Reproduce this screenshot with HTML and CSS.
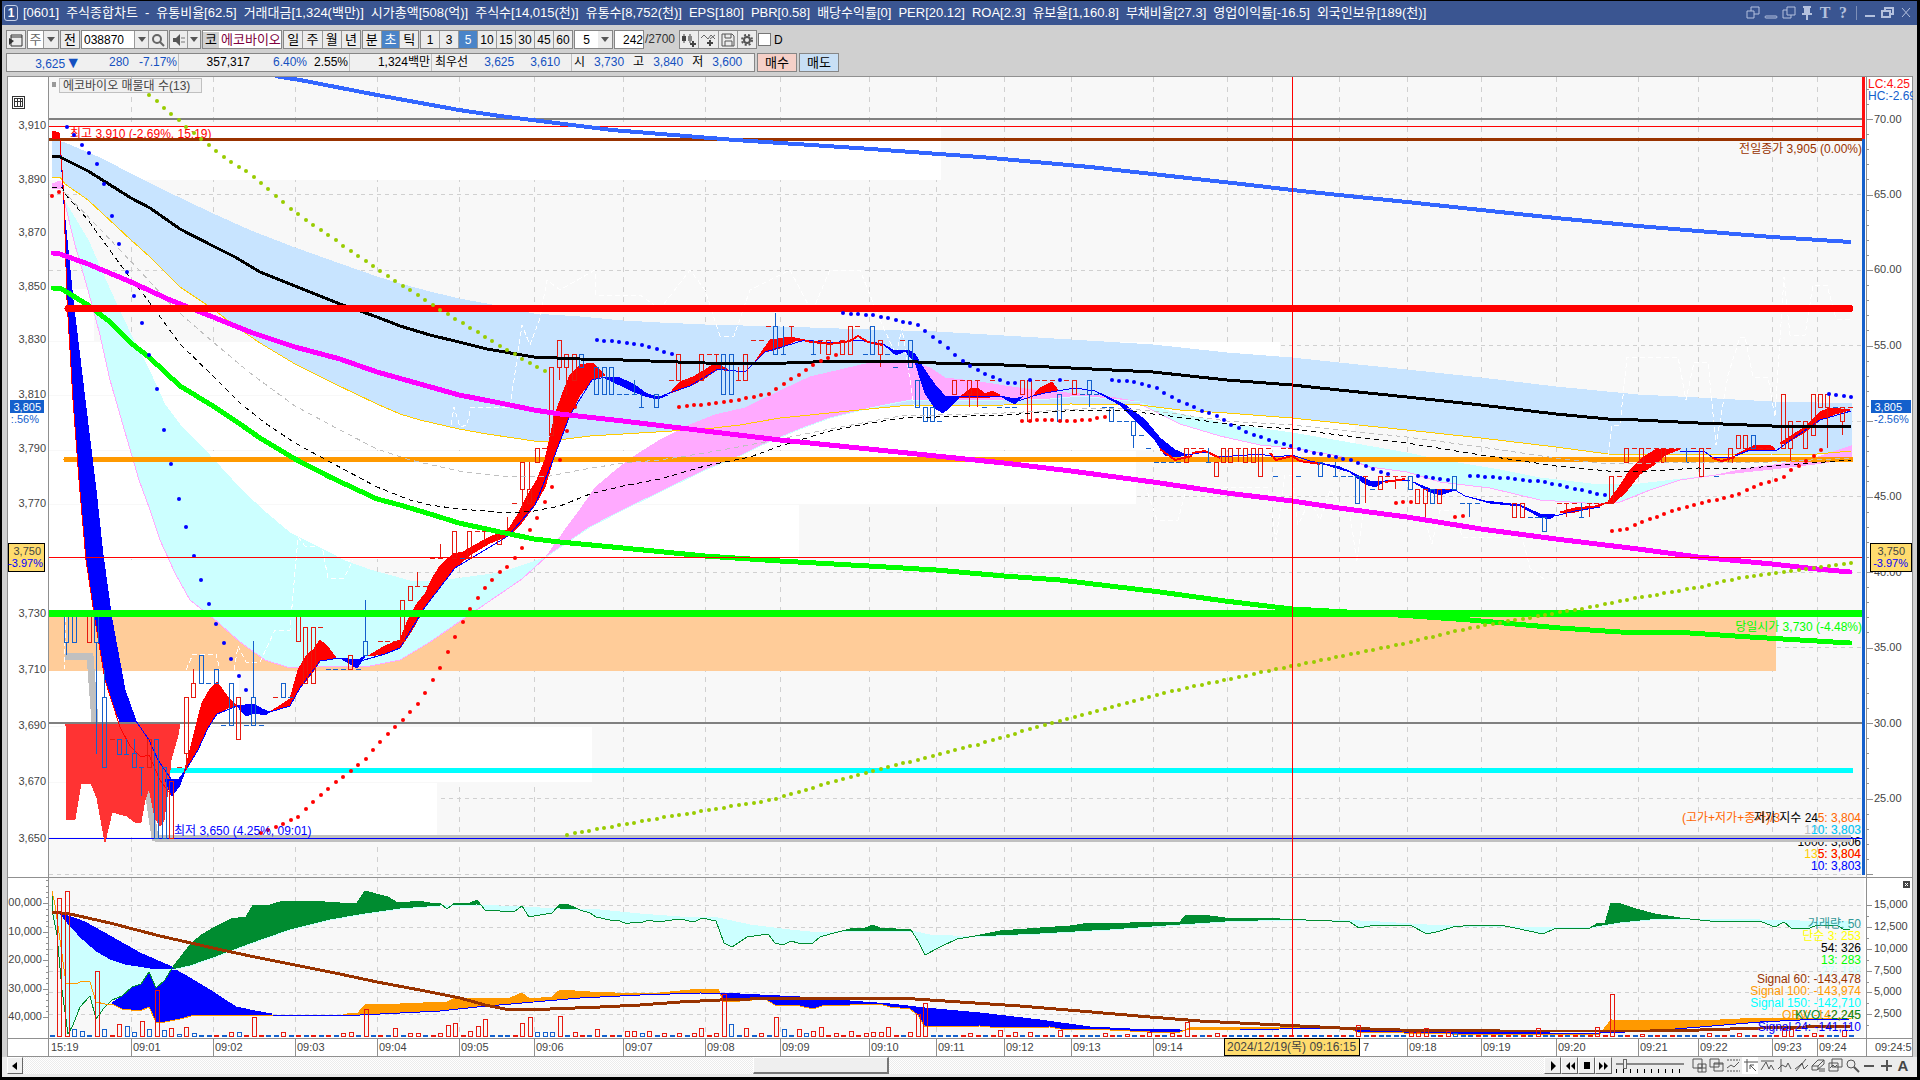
FILE: index.html
```html
<!DOCTYPE html>
<html lang="ko">
<head>
<meta charset="utf-8">
<title>[0601] 주식종합차트</title>
<link rel="stylesheet" href="styles.css">
</head>
<body>
<div class="window">
  <header class="titlebar">
    <span class="badge">1</span>
    <h1 class="title"><span>[0601]</span><span>주식종합차트</span><span>-</span><span>유통비율[62.5]</span><span>거래대금[1,324(백만)]</span><span>시가총액[508(억)]</span><span>주식수[14,015(천)]</span><span>유통수[8,752(천)]</span><span>EPS[180]</span><span>PBR[0.58]</span><span>배당수익률[0]</span><span>PER[20.12]</span><span>ROA[2.3]</span><span>유보율[1,160.8]</span><span>부채비율[27.3]</span><span>영업이익률[-16.5]</span><span>외국인보유[189(천)]</span></h1>
    <div class="winbtns">
      <button aria-label="분리"><svg width="14" height="14"><path d="M5 1h8v7h-5M1 5h7v7h-7zM5 5v-4" /></svg></button>
      <button aria-label="접기"><svg width="14" height="14"><rect x="1" y="10" width="12" height="2" rx="1"/></svg></button>
      <button aria-label="복제"><svg width="14" height="14"><path d="M5 1h8v8h-8zM5 4h-4v8h8v-3"/></svg></button>
      <button aria-label="고정"><svg width="14" height="14"><path class="solid" d="M3 0h8v2h-1v5h2v2h-4v5h-2v-5h-4v-2h2v-5h-1z"/></svg></button>
      <button class="glyph" aria-label="글꼴">T</button>
      <button class="glyph" aria-label="도움말">?</button>
      <span class="sep"></span>
      <button aria-label="최소화"><svg width="14" height="14"><path class="solid" d="M2 9h10v2h-10z"/></svg></button>
      <button aria-label="복원"><svg width="14" height="14"><path d="M4 5v-3h8v6h-3M1 5h8v6h-8z" stroke-width="2"/></svg></button>
      <button aria-label="닫기"><svg width="14" height="14"><path d="M3 2l8 9M11 2l-8 9"/></svg></button>
    </div>
  </header>

  <section class="tools">
    <div class="row">
      <button class="btn w20" aria-label="목록"><svg width="16" height="14"><path d="M3 2h11v11h-11zM3 4h11" stroke="#333" fill="none"/><path d="M1 5v7l5-4z" fill="#333"/></svg></button>
      <div class="group g32"><button class="cell white dim">주</button><button class="cell w14 arrow" aria-label="펼치기"></button></div>
      <button class="btn w20">전</button>
      <div class="group g87"><input class="code" value="038870" aria-label="종목코드"><button class="cell w14 arrow" aria-label="종목 펼치기"></button><button class="cell w18" aria-label="검색"><svg width="14" height="14"><circle cx="6" cy="6" r="4" stroke="#666" fill="none" stroke-width="2"/><path d="M9 9l4 4" stroke="#666" stroke-width="2"/></svg></button></div>
      <div class="group g32"><button class="cell" aria-label="소리"><svg width="14" height="14"><path d="M1 5h3l4-4v12l-4-4h-3z" fill="#555"/><path d="M10 4v2M10 8v2M12 4v2M12 8v2" stroke="#777"/></svg></button><button class="cell w12 arrow" aria-label="소리 펼치기"></button></div>
      <div class="group name"><span class="mkt">코</span><span class="stock">에코바이오</span></div>
      <div class="group g78"><button class="cell">일</button><button class="cell">주</button><button class="cell">월</button><button class="cell">년</button></div>
      <div class="group g57"><button class="cell">분</button><button class="cell on">초</button><button class="cell">틱</button></div>
      <div class="group g153 digits"><button class="cell">1</button><button class="cell">3</button><button class="cell on">5</button><button class="cell">10</button><button class="cell">15</button><button class="cell">30</button><button class="cell">45</button><button class="cell">60</button></div>
      <div class="group g39 digits"><input class="num5" value="5" aria-label="주기"><button class="cell w14 arrow" aria-label="주기 펼치기"></button></div>
      <div class="group digits"><input class="num242" value="242" aria-label="표시 봉 수"></div>
      <span class="total">/2700</span>
      <div class="group g78">
        <button class="cell" aria-label="봉 추가"><svg width="16" height="14"><path d="M3 1v9M9 1v9" stroke="#444"/><path d="M1 3h4v5h-4z" fill="#444"/><path d="M7 3h4v5h-4z" fill="#888"/><path d="M12 8v6M9 11h6" stroke="#444" stroke-width="2"/></svg></button>
        <button class="cell" aria-label="지표 추가"><svg width="16" height="14"><path d="M1 5l3-3 4 4 3-4 4 4M10 6l5-4" stroke="#666" fill="none"/><path d="M10 7v6M7 10h6" stroke="#444" stroke-width="2"/></svg></button>
        <button class="cell" aria-label="저장"><svg width="14" height="14"><path d="M1 1h10l2 2v10h-12zM4 1v4h6v-4M4 13v-5h7v5" stroke="#555" fill="none"/></svg></button>
        <button class="cell" aria-label="설정"><svg width="14" height="14"><circle cx="7" cy="7" r="3" stroke="#555" fill="none" stroke-width="2"/><circle cx="7" cy="7" r="5" stroke="#555" fill="none" stroke-width="2" stroke-dasharray="2 2"/></svg></button>
      </div>
      <label class="check"><input type="checkbox">D</label>
    </div>
    <div class="row">
      <div class="quote">
        <div class="q q1"><span class="b">3,625<i>▼</i></span><span class="b c48">280</span><span class="b c48">-7.17%</span></div>
        <div class="q q2"><span>357,317</span><span class="b c56">6.40%</span><span class="c40">2.55%</span></div>
        <div class="q q3"><span>1,324백만</span></div>
        <div class="q q4"><span>최우선</span><span class="b">3,625</span><span class="b">3,610</span></div>
        <div class="q q5"><span>시</span><span class="b">3,730</span><span>고</span><span class="b">3,840</span><span>저</span><span class="b">3,600</span></div>
      </div>
      <button class="trade buy">매수</button>
      <button class="trade sell">매도</button>
    </div>
  </section>

  <main class="chart">
    <svg id="chart" viewBox="7 76 1906 981" role="img" aria-label="에코바이오 5초 차트"></svg>
  </main>

  <footer class="bottom">
    <button class="sbtn" aria-label="왼쪽으로"><svg width="8" height="10"><path d="M6 1v8l-5-4z"/></svg></button>
    <div class="track"><span class="lead"></span><span class="thumb"></span></div>
    <div class="play">
      <button class="sbtn" aria-label="재생"><svg width="10" height="10"><path d="M3 0v10l5-5z"/></svg></button>
      <button class="sbtn" aria-label="뒤로"><svg width="10" height="10"><path d="M5 1v8l-4-4zM10 1v8l-4-4z"/></svg></button>
      <button class="sbtn" aria-label="정지"><svg width="10" height="10"><path d="M2 1h6v7h-6z"/></svg></button>
      <button class="sbtn" aria-label="앞으로"><svg width="10" height="10"><path d="M0 1v8l4-4zM5 1v8l4-4z"/></svg></button>
    </div>
    <div class="speed"><input type="range" min="0" max="9" value="1" aria-label="속도"><span class="marks"></span></div>
    <div class="marktools">
      <button aria-label="창 추가"><svg width="15" height="15"><path d="M1 1h9v9h-9zM6 6h8v8h-8zM10 6v8M6 10h8"/></svg></button>
      <button aria-label="창 겹침"><svg width="15" height="15"><path d="M1 1h9v8h-9zM5 5h9v8h-9zM5 6h9"/></svg></button>
      <button aria-label="범위"><svg width="15" height="15"><path d="M1 2h13M1 13h13" stroke-dasharray="2 1"/><path d="M1 10l4-3 3 2 5-5"/></svg></button>
      <button class="down" aria-label="십자선"><svg width="15" height="15"><path d="M1 4h14M4 1v13M7 7l6 6M7 7v4M7 7h4"/></svg></button>
      <button aria-label="수평선"><svg width="15" height="15"><path d="M1 3h13M1 12l5-8 3 7 2-4 3 5"/></svg></button>
      <button aria-label="수직선"><svg width="15" height="15"><path d="M4 1v13M1 11l4-4 4 2 2-4 3 6"/></svg></button>
      <button aria-label="추세선"><svg width="15" height="15"><path d="M2 13l10-12M1 11l4-3 3-3 2 6 4-4"/></svg></button>
      <button aria-label="모두 지우기"><svg width="15" height="15"><path d="M1 8l6-6h6l-6 6zM1 8v4h5l7-6v-4M7 8v4M9 10v4M11 10v4M13 10v4"/></svg></button>
      <button aria-label="차트 복사"><svg width="15" height="15"><path d="M4 1h10v8h-10zM1 5h9v8h-9zM2 10l3-3 2 2 2-2"/></svg></button>
      <button aria-label="확대경"><svg width="15" height="15"><circle cx="6" cy="6" r="4"/><path d="M9 9l5 5" stroke-width="2"/></svg></button>
      <button aria-label="축소"><svg width="15" height="15"><path d="M2 8h10" stroke-width="2"/></svg></button>
      <button aria-label="확대"><svg width="15" height="15"><path d="M2 8h11M8 2v11" stroke-width="2"/></svg></button>
      <button class="autobtn">A</button>
    </div>
  </footer>
</div>
<script src="chart.js"></script>
</body>
</html>
```
FILE: styles.css
```css
* { box-sizing: border-box; }
html { background: #000; }
body { margin: 0; padding: 1px 3px 3px 2px; background: #000; color: #000; font: 12px/16px "Liberation Sans", "Noto Sans CJK KR", sans-serif; }
button, input { font: inherit; color: inherit; margin: 0; padding: 0; border: 0; background: none; border-radius: 0; }
.window { background: #d0d0d0; }
.titlebar { display: flex; align-items: center; height: 24px; padding: 0 4px 0 2px; background: #3a5591; color: #fff; }
.badge { width: 14px; height: 16px; line-height: 14px; border: 1px solid #c8d2e8; border-radius: 3px; text-align: center; font-weight: bold; }
.title { flex: 1; display: flex; gap: 7px; margin: 0 0 0 5px; font: inherit; font-size: 13px; white-space: nowrap; }
.winbtns { display: flex; align-items: center; gap: 4px; }
.winbtns button { display: block; width: 14px; height: 16px; color: #b4c1de; }
.winbtns svg { display: block; fill: none; stroke: #b4c1de; }
.winbtns .solid { fill: #b4c1de; stroke: none; }
.winbtns .glyph { font: bold 16px/16px "Liberation Serif", serif; }
.sep { width: 1px; height: 14px; margin: 0 2px; background: #7f90b8; }

.tools { display: flex; flex-direction: column; gap: 4px; height: 51px; padding: 5px 4px 0; }
.row { display: flex; gap: 2px; height: 19px; }
.row:first-child { gap: 1px; font-size: 13px; }
.row .digits { font-size: 12px; }
.btn, .group { display: flex; align-items: center; justify-content: center; height: 19px; border: 1px solid #868686; background: #ececec; }
.cell { display: flex; flex: 1; align-items: center; justify-content: center; height: 17px; border-right: 1px solid #9a9a9a; }
.cell:last-child { border-right: 0; }
.cell.on { background: #4a84c8; color: #fff; }
.white { background: #fff; }
.dim { color: #666; }
.w12 { flex: 0 0 12px; } .w14 { flex: 0 0 14px; } .w18 { flex: 0 0 18px; } .w20 { width: 20px; }
.g32 { width: 32px; } .g39 { width: 39px; } .g57 { width: 57px; } .g78 { width: 78px; } .g87 { width: 87px; } .g153 { width: 153px; }
.arrow::before { content: ""; border: 4px solid transparent; border-top: 5px solid #555; border-bottom: 0; }
.code { width: 53px; height: 17px; padding-left: 2px; font-size: 12px; background: #fff; border-right: 1px solid #9a9a9a; }
.name { width: 80px; justify-content: flex-start; background: #fff; }
.mkt { width: 16px; background: #d0d0d0; text-align: center; }
.stock { padding-left: 2px; color: #800040; white-space: nowrap; }
.num5 { width: 23px; height: 17px; text-align: center; background: #fff; }
.num242 { width: 28px; height: 17px; text-align: right; background: #fff; }
.total { width: 33px; line-height: 19px; font-size: 12px; color: #333; }
.check { display: flex; align-items: center; gap: 3px; font-size: 12px; }
.check input { appearance: none; width: 13px; height: 13px; border: 1px solid #777; background: #fff; }
.quote { display: flex; width: 749px; border: 1px solid #868686; background: #f0f0f0; line-height: 17px; }
.q { display: flex; border-right: 1px solid #c0c0c0; white-space: nowrap; }
.q span { text-align: right; }
.q i { font-style: normal; font-size: 16px; }
.q:last-child { border: 0; }
.b { color: #1450c0; }
.q1 { width: 172px; } .q1 span:first-child { width: 74px; }
.c48 { width: 48px; } .c56 { width: 57px; } .c40 { width: 41px; }
.q2 { width: 171px; } .q2 span:first-child { width: 71px; }
.q3 { width: 82px; } .q3 span { width: 80px; }
.q4 { width: 140px; gap: 16px; padding-left: 3px; }
.q5 { gap: 9px; padding-left: 2px; }
.trade { width: 40px; height: 19px; border: 1px solid #868686; font-size: 13px; }
.buy { background: #f5d0c8; }
.sell { background: #c8dff5; }

.chart { margin: 0 4px 0 5px; background: #fff; }
.chart svg { display: block; width: 100%; shape-rendering: crispEdges; }
.chart text { fill: #444; font-size: 12px; }
.chart .axis { font-size: 11px; }
.end { text-anchor: end; }

.bottom { display: flex; height: 20px; padding: 0 6px 2px 5px; background: #ececec; }
.sbtn { display: flex; align-items: center; justify-content: center; width: 16px; height: 17px; background: #f0f0f0; border: 1px solid #fff; border-right-color: #666; border-bottom-color: #666; }
.track { display: flex; flex: 1; height: 17px; background: repeating-conic-gradient(#fff 0 25%, #ececec 0 50%) 0 0 / 2px 2px; }
.lead { width: 48%; }
.thumb { width: 136px; background: #efefef; border: 1px solid #fff; border-right: 2px solid #777; border-bottom: 2px solid #777; }
.play { display: flex; }
.play .sbtn { width: 17px; }
.speed { width: 73px; padding: 1px 0 0 4px; }
.speed input { appearance: none; display: block; width: 68px; height: 11px; background: linear-gradient(#888, #888) 0 5px / 100% 2px no-repeat; }
.speed input::-webkit-slider-thumb { appearance: none; width: 4px; height: 10px; background: #eee; border: 1px solid #666; }
.marks { display: block; height: 4px; background: repeating-linear-gradient(90deg, #000 0 1px, transparent 1px 7px); }
.marktools { display: flex; gap: 1px; padding-left: 6px; }
.marktools button { display: flex; align-items: center; justify-content: center; width: 16px; height: 17px; }
.marktools svg { fill: none; stroke: #555; }
.marktools .down { background: #fff; }
.marktools .autobtn { font: bold 15px/17px "Liberation Sans", sans-serif; color: #444; }
```
FILE: chart.js
```js
const NS = 'http://www.w3.org/2000/svg';
const svg = document.getElementById('chart');
function add(tag, attrs, text) {
  const e = document.createElementNS(NS, tag);
  for (const k in attrs) e.setAttribute(k, attrs[k]);
  if (text !== undefined) e.textContent = text;
  svg.appendChild(e);
}
const pts = s => s.trim().split(/\s+/).map(p => p.split(',').map(Number));
const rect = (x, y, w, h, fill) => add('rect', { x, y, width: w, height: h, fill });
const line = (p, stroke, width = 1, extra = {}) => add('polyline', { points: p, fill: 'none', stroke, 'stroke-width': width, ...extra });
const poly = (p, fill) => add('polygon', { points: p, fill, stroke: fill, 'stroke-width': 1 });
const label = (x, y, s, fill, end) => add('text', { x, y, style: fill ? 'fill:' + fill : '', class: end ? 'end' : '' }, s);
const axis = (x, y, s, fill, end) => add('text', { x, y, style: fill ? 'fill:' + fill : '', class: end ? 'axis end' : 'axis' }, s);
const hline = (y, x1, x2, c, w, cap = 'butt') => line(`${x1},${y} ${x2},${y}`, c, w, { 'stroke-linecap': cap });
function at(p, x) {
  let i = 1;
  while (i < p.length - 1 && p[i][0] < x) i++;
  const [a, b] = [p[i - 1], p[i]];
  return a[1] + (b[1] - a[1]) * (x - a[0]) / (b[0] - a[0]);
}
const STEP = 7.465, X0 = 52;
function dots(s, fill) {
  const p = pts(s), last = p[p.length - 1][0];
  for (let x = X0 + Math.ceil((p[0][0] - 2 - X0) / STEP) * STEP; x <= last + 2; x += STEP)
    add('circle', { cx: Math.round(x), cy: Math.round(at(p, x)), r: 2, fill, 'shape-rendering': 'auto' });
}
function band(a, b, over, under) {
  const p = pts(a), q = pts(b), end = p[p.length - 1][0];
  let up = '', down = '';
  for (let x = Math.ceil(p[0][0]); x <= end; x++) {
    const ya = Math.round(at(p, x)), yb = Math.round(at(q, x));
    if (ya < yb) up += `M${x} ${ya}h1V${yb}h-1z`; else if (ya > yb) down += `M${x} ${yb}h1V${ya}h-1z`;
  }
  add('path', { d: up, fill: over });
  add('path', { d: down, fill: under });
}

/* backgrounds and volume profile */
rect(49, 77, 1815, 960, '#f8f8f8');
const grid = [131, 213, 295, 377, 459, 534, 623, 705, 780, 869, 936, 1004, 1071, 1153, 1227, 1272, 1339, 1407, 1481, 1556, 1638, 1698, 1772, 1817];
grid.forEach(x => line(`${x + .5},77 ${x + .5},1037`, '#d0d0d0', 1, { 'stroke-dasharray': '5 5' }));
[194, 270, 345, 421, 496, 572, 647, 798, 874, 905, 927, 949, 971, 992, 1014].forEach(y => line(`49,${y + .5} 1864,${y + .5}`, '#d0d0d0', 1, { 'stroke-dasharray': '4 4' }));
[[127, 181, 941], [289, 342, 94], [342, 396, 1280], [396, 451, 1355], [451, 505, 1136], [505, 560, 799], [560, 614, 350], [671, 727, 239], [727, 783, 592], [783, 838, 437]]
  .forEach(r => rect(49, r[0], r[2] - 49, r[1] - r[0] - 1, '#fff'));
rect(49, 617, 1727, 54, '#ffcc99');

/* moving-average bands */
const bandTop = '52,140 65,143 100,158 131,174 167,192 213,214 251,231 295,248 340,264 377,277 400,284 430,292 459,299 487,304 534,314 580,317 623,321 660,323 705,325 780,327 869,330 936,332 1004,336 1071,340 1153,345 1227,353 1292,358 1339,363 1407,370 1481,378 1556,387 1638,395 1698,398 1772,402 1817,403 1851,404';
const bandLow = '52,178 60,177 65,184 88,200 131,240 150,257 180,287 213,309 235,326 260,343 295,364 335,384 377,404 400,414 420,420 459,429 487,434 534,441 550,441 590,436 623,434 705,429 740,425 780,418 869,409 911,405 936,406 1004,405 1071,404 1140,405 1180,410 1227,413 1292,418 1339,423 1407,430 1481,438 1556,447 1608,454 1698,454 1730,455 1772,454 1817,454 1851,451';
poly(bandTop + ' ' + bandLow.split(' ').reverse().join(' '), '#c8e4ff');
const lensTop = '64,200 88,240 110,290 131,335 149,370 165,405 180,425 200,445 213,459 235,483 250,498 265,512 290,533 320,548 345,561 370,570 410,581 440,581 470,577 500,573 530,563 546,557';
const lensLow = '64,200 75,245 88,290 100,335 110,380 125,432 139,480 150,510 160,540 175,573 190,600 205,612 213,618 240,642 265,660 290,668 320,666 370,666 400,660 430,642 459,622 500,594 522,579 546,557';
poly(lensTop + ' ' + lensLow.split(' ').reverse().join(' '), '#ccffff');
line(lensLow, '#ffaaff');
poly('52,184 60,181 64,188 52,189', '#ffaaff');
const pinkLow = '546,557 590,527 623,510 660,492 705,470 740,456 760,446 800,429 830,418 870,408 911,400 960,401 1004,400 1050,399 1080,396 1140,402';
poly('546,557 565,530 580,510 595,488 615,471 630,459 660,440 690,425 715,415 745,408 780,391 810,377 840,370 870,363 911,362 930,368 945,378 980,382 1005,386 1040,391 1080,394 1110,397 ' + pinkLow.split(' ').reverse().join(' '), '#ffaaff');
line(pinkLow, '#ccffff');
const rightLow = '1140,404 1180,424 1220,436 1260,445 1292,448 1339,456 1370,467 1407,472 1440,482 1490,488 1540,500 1600,504 1620,502 1650,490 1680,480 1716,475';
poly('1140,403 1180,414 1227,424 1292,433 1339,441 1407,453 1440,460 1500,470 1540,478 1600,485 1640,484 1690,478 ' + rightLow.split(' ').reverse().join(' '), '#ccffff');
line(rightLow, '#ffaaff');
poly('1716,475 1750,468 1790,463 1815,458 1851,446 1851,459 1815,464 1772,469', '#ffaaff');
line(bandLow, '#ffcc00');

/* silver support, horizontal levels */
line('65,656 90,656 95,722', '#c0c0c0', 7, { 'stroke-linejoin': 'round' });
line('148,790 155,838 1851,838', '#c0c0c0', 7, { 'stroke-linejoin': 'round' });
hline(119, 49, 1863, '#808080', 2);
hline(126.5, 49, 1863, '#ff0000', 1);
label(70, 138, '최고 3,910 (-2.69%, 15:19)', '#ff0000');
hline(139.5, 49, 1863, '#993300', 3);
hline(459.5, 66, 1851, '#ff9900', 5, 'round');
hline(770.5, 170, 1851, '#00ffff', 5, 'round');
hline(723, 49, 1863, '#808080', 2);
hline(838.5, 49, 1863, '#0000ff', 1);

/* last-period faint line */
['64,670 66,617', '186,670 193,654 216,654 220,670', '234,670 238,646 246,662 260,662 275,630 290,630 298,537 305,546 322,546 328,578 344,578 353,560', '451,425 454,407 460,427 467,425 471,407 510,407 522,325 530,345 540,318 547,280 560,290 595,270 596,295 640,295 660,309 690,270 705,290 720,336 734,336 750,290 790,270 812,312 830,270 860,270 880,320 896,355 902,328 913,400 915,410', '1145,485 1157,520 1178,520 1187,487 1268,487 1276,540 1285,475 1292,476 1298,525 1310,500 1320,520 1330,490 1350,515 1357,562 1365,500', '1425,520 1432,544 1440,510 1455,510 1462,537 1522,537 1530,568 1545,580', '1608,455 1612,425 1620,425 1627,357 1678,357 1686,400 1694,362 1708,362 1716,445 1728,375 1740,337 1745,337 1753,377 1768,377 1775,417 1784,277 1790,335 1805,335 1813,285 1827,285 1836,319 1850,319']
  .forEach(p => line(p, '#ffffff', 1, { 'stroke-dasharray': '5 3' }));

/* candles: centre, top, bottom, high, low; r = up, b = down */
const RED = '#e6190f', BLUE = '#1460cc';
const boxes = {
  b: '66,616,642,616,655 74,616,642 96,616,642,616,754 104,697,767,670 119,739,754 134,753,767,739 156,739,838 164,767,838 201,655,683 216,669,683 231,683,725 253,697,725,641 283,683,697 365,641,655,600 581,354,367 596,367,394 604,367,394 611,367,394 656,394,407 723,354,394 731,354,394 775,326,354,313 872,326,354 910,340,367 917,380,407 925,407,421 932,407,421 1059,394,421 1089,380,394,380,407 1111,407,421 1133,421,435,421,448 1320,462,476 1357,476,503 1410,476,489 1432,489,503 1454,476,489 1544,517,531 1753,435,448',
  r: '89,616,642 149,739,767 171,781,838 186,697,753,697,770 193,683,697,669 238,697,739 298,616,641 305,627,683 313,627,683 350,655,669 402,600,641 410,586,600 454,531,558 469,531,558 499,531,544 522,462,489,462,516 529,489,503,462 537,448,462 551,367,435 559,340,367,340,380 566,354,367,354,395 574,354,380 678,354,380 701,354,380 745,354,380 828,340,354 842,340,354 850,326,354 880,340,354,340,367 954,380,394 969,380,394,380,407 1022,380,394 1029,380,421 1074,380,394 1186,448,462 1216,462,476 1223,448,462 1230,448,462 1245,448,462 1253,448,462 1260,448,476 1380,476,489 1417,489,503 1425,489,503,489,517 1439,489,503 1514,503,517 1522,503,517 1611,476,503 1626,448,462 1641,448,462 1663,448,462 1701,448,476 1730,448,462 1738,435,448 1745,435,448 1783,394,448 1790,421,448,421,462 1805,421,448 1813,394,435 1820,394,407 1827,394,407,394,448 1842,407,421,407,435'
};
const ticks = {
  r: '112,739 179,767 275,697 320,627 380,641 387,641 395,641 417,586,572 425,586 432,558 440,558,544 477,531 484,531,545 492,531 507,531,517 514,503 544,448 671,380 686,380 693,380 709,354 716,354,367 738,380,367 753,340 761,340 768,326 791,326,340 820,340,354 857,326 902,340 962,380 977,380,407 992,380 1037,380 1044,380 1052,380 1066,380 1193,448 1201,448 1238,448,462 1268,448 1283,448 1290,448 1312,462 1365,476,503 1387,476 1395,476,489 1403,476 1447,489 1559,503 1566,503,517 1574,503 1589,503,517 1596,503 1604,503 1619,476 1634,448 1648,448 1656,448 1671,448 1678,448 1693,448 1708,448 1760,448 1768,448 1798,421 1850,407',
  b: '126,754,739 141,767,796 208,683 223,725 246,725 261,725 290,697 328,669 335,669 343,669 358,669 462,558 619,394 626,394 634,394,380 641,407,394 783,354,326 813,354,340 865,354 887,354 895,367 939,421 984,407 999,407 1007,407 1014,407 1082,394 1096,394 1104,407 1119,421 1126,421 1141,435 1148,448 1156,462 1163,462 1171,462 1178,462 1208,462,448 1275,476 1298,476 1335,476,462 1343,476 1350,476 1372,489 1462,503 1469,503,517 1477,503 1530,517 1537,517 1581,517,503 1686,462,448 1716,476 1835,407'
};

/* lower-layer ribbons, then candles, then averages */
const ribbons = [
  ['#0000ff', '60,140 65,220 73,300 85,400 96,490 103,555 112,620 125,690 136,721 120,722 105,680 95,620 86,560 79,480 73,400 67,300 64,200'],
  ['#ff3333', '66,724 180,724 178,735 171,760 168,790 164,820 160,826 155,818 149,788 145,800 141,822 135,822 127,816 112,812 105,842 97,798 91,783 81,783 75,819 67,819'],
  ['#0000ff', '165,779 179,779 185,771 180,785 172,796 167,785'],
  ['#ff0000', '184,773 190,750 197,722 202,703 210,689 217,682 227,696 237,706 228,708 217,714 208,728 198,750'],
  ['#0000ff', '237,706 254,704 262,709 270,712 265,715 254,713 246,716'],
  ['#ff0000', '270,712 290,699 298,670 306,656 314,649 320,640 328,647 336,658 320,661 312,673 300,688 290,706 276,710'],
  ['#0000ff', '340,658 358,660 365,656 357,668 350,664'],
  ['#ff0000', '368,656 385,646 400,640 408,620 416,605 425,594 433,577 440,566 453,554 463,552 475,545 490,537 508,530 517,516 525,500 537,480 545,460 555,415 562,395 570,375 580,365 593,363 605,375 592,380 580,395 570,415 560,440 553,460 545,487 535,505 520,525 508,536 490,543 470,555 455,568 445,580 425,607 412,630 400,648 385,654'],
  ['#0000ff', '603,377 620,378 635,385 648,395 660,397 668,395 657,399 645,396 630,390'],
  ['#ff0000', '670,393 680,382 693,377 705,370 715,363 725,368 730,371 718,369 705,378 690,386'],
  ['#ff0000', '755,362 763,350 770,340 790,337 805,340 795,341 780,348 765,352'],
  ['#0000ff', '883,344 893,350 908,350 915,354 920,363 935,385 945,396 960,397 950,407 943,413 935,408 925,393 915,362 905,351 896,355'],
  ['#ff0000', '960,397 972,388 978,388 985,394 992,391 1000,395 985,398 970,397'],
  ['#0000ff', '1000,396 1015,399 1022,397 1015,404'],
  ['#ff0000', '1033,396 1040,388 1052,382 1058,390 1045,393'],
  ['#0000ff', '1095,391 1110,398 1125,405 1145,420 1160,438 1175,450 1187,455 1175,457 1165,455 1155,440 1140,425 1120,405'],
  ['#0000ff', '1320,463 1340,467 1355,474 1370,481 1385,481 1375,487 1365,484 1350,472 1330,466'],
  ['#0000ff', '1413,482 1430,489 1455,490 1440,495 1430,492'],
  ['#0000ff', '1465,496 1485,501 1520,505 1540,514 1555,515 1550,519 1540,517 1520,506 1490,503'],
  ['#ff0000', '1560,512 1575,508 1595,506 1608,502 1600,506 1575,512'],
  ['#ff0000', '1607,503 1617,490 1630,470 1642,458 1655,450 1680,449 1665,455 1655,464 1640,474 1625,493 1612,504'],
  ['#ff0000', '1735,455 1755,445 1770,445 1775,449 1750,450'],
  ['#ff0000', '1780,443 1805,427 1820,412 1830,408 1850,410 1835,414 1820,420 1805,432 1785,444'],
  ['#ff0000', '52,131 59,133 59,138 52,138']
];
ribbons.forEach(r => poly(r[1], r[0]));
line('60,140 64,200 67,300 73,400 79,480 86,560 95,620 105,680 120,727 130,746 141,757 149,755 160,780 171,795', '#ff0000');
line('125,690 136,721 149,740 158,760 171,779', '#0000ff');
['185,771 198,750 208,728 217,714 237,706 246,714 270,712 290,706 300,688 320,661 340,658 357,662 385,654 400,648 425,607 455,568 508,536 535,505 553,460 570,415 592,380 605,377 635,388 657,398 672,392 690,386 718,369 745,372 765,352 805,340 830,343 857,340 883,344', '960,397 985,396 1000,396 1015,402 1033,396 1045,393 1075,388 1095,391', '1187,455 1205,452 1220,457 1260,454 1276,457 1292,455 1310,461 1335,466', '1385,481 1410,480', '1455,490 1465,496', '1555,516 1575,511 1600,507', '1680,451 1705,452 1712,457 1730,458 1750,450 1776,451 1785,444 1820,420 1851,411']
  .forEach(p => line(p, '#0000ff'));
['805,341 830,344 850,341 858,336 868,342 883,345', '1160,449 1175,460 1192,456', '1192,453 1205,451 1220,458', '1270,453 1276,460 1292,456 1300,461 1320,464', '1385,482 1405,479', '1712,458 1722,461 1735,457']
  .forEach(p => line(p, '#ff0000', 2));
for (const k in boxes) {
  const c = k === 'r' ? RED : BLUE;
  let d = '';
  boxes[k].split(' ').forEach(s => {
    const [x, t, b, h, l] = s.split(',').map(Number);
    d += `M${x - 1.5} ${t + .5}h4V${b + .5}h-4z`;
    if (h < t) d += `M${x + .5} ${h}V${t}`;
    if (l > b) d += `M${x + .5} ${b}V${l}`;
  });
  ticks[k].split(' ').forEach(s => {
    const [x, y, v] = s.split(',').map(Number);
    d += `M${x - 2} ${y + .5}h5`;
    if (v) d += `M${x + .5} ${y}V${v}`;
  });
  add('path', { d, fill: 'none', stroke: c });
}
line('52,187 62,187 65,194 88,220 125,271 150,303 180,344 213,376 240,403 265,423 295,443 330,462 377,487 410,500 430,505 459,509 510,513 534,511 560,506 590,494 623,486 660,479 705,466 750,457 780,446 830,431 870,423 910,417 936,417 1004,415 1080,410 1120,410 1170,416 1227,424 1292,429 1339,435 1407,443 1481,455 1556,466 1608,471 1650,471 1698,468 1740,469 1772,466 1851,460', '#000', 1, { 'stroke-dasharray': '5 4' });
line('62,190 100,229 140,271 175,309 213,342 250,373 295,406 340,430 377,449 410,460 459,471 500,476 545,477 580,470 623,463 660,460 705,453 760,443 830,429 900,416 936,415 1004,413 1080,409 1120,408 1170,413 1227,421 1292,425 1339,430 1407,437 1481,447 1556,458 1608,464 1698,462 1772,462 1851,458', '#c0c0c0', 1, { 'stroke-dasharray': '5 4' });
line('275,76 300,80 377,95 459,110 500,116 612,130 735,140 857,148 980,157 1090,167 1250,185 1292,190 1339,195 1407,202 1481,210 1556,218 1638,226 1698,231 1772,237 1851,242', '#3366ff', 4);
line('52,156 60,157 88,171 131,198 150,208 180,229 213,246 235,257 260,272 295,286 340,304 377,317 400,326 430,335 459,342 487,349 534,357 580,359 623,360 705,363 760,364 840,361 900,361 936,363 1004,365 1071,368 1153,372 1227,380 1292,385 1339,390 1407,397 1481,405 1556,414 1608,419 1638,420 1698,423 1772,426 1851,426', '#000', 3);
const thick = { 'stroke-linecap': 'round', 'stroke-linejoin': 'round' };
line('53,253 60,254 88,264 131,282 170,300 213,317 250,332 295,347 340,359 377,372 420,384 459,395 500,403 534,410 560,414 623,421 705,431 780,440 869,449 936,456 1004,463 1071,471 1153,482 1227,493 1292,501 1339,508 1407,517 1481,529 1556,539 1638,549 1698,557 1772,564 1817,569 1850,572', '#ff00ff', 5, thick);
line('53,288 60,288 88,305 110,322 131,343 150,358 180,386 213,406 240,424 260,438 295,459 330,477 377,499 400,505 430,514 459,523 500,532 534,539 560,542 623,548 705,556 780,561 869,566 936,570 1004,576 1060,580 1160,592 1225,601 1292,609 1384,614 1470,620 1560,628 1620,632 1690,633 1750,637 1800,640 1850,643', '#00ff00', 5, thick);
hline(308.5, 68, 1850, '#ff0000', 7, 'round');
hline(613.5, 49, 1863, '#00ff00', 7);

/* parabolic dots */
dots('66,126 74,134 81,144 89,153 96,162 104,183 111,213 119,243 126,270 134,296 141,321 149,355 156,386 163,426 171,462 178,495 186,526 193,553 201,579 208,602 216,623 223,642 231,659 238,675 246,690', '#0000ff');
['596,340 619,342 641,345 656,349 671,354', '842,313 872,315 910,323 918,325 933,337 947,347 962,361 985,374 1007,383 1014,383', '1029,380 1030,380', '1059,380 1060,380', '1111,380 1133,382 1156,388 1178,400 1200,410 1215,415 1230,424 1245,431 1260,437 1290,446 1305,451 1320,454 1350,460 1372,468 1387,474', '1417,476 1447,480', '1469,476 1506,478 1544,482 1604,495', '1827,394 1850,397'].forEach(s => dots(s, '#0000ff'));
['52,196 59,192', '261,833 283,824 298,817 305,810 320,796 335,783 365,760 372,751 387,735 402,721 417,705 425,693 440,668 447,653 462,623 469,610 484,589 499,573 507,567 514,559 522,549 529,531 537,518 544,503 551,491 559,462 566,434 574,409', '678,407 708,404 738,400 768,394 790,380 806,370 820,361 835,355', '1022,421 1050,420 1066,421 1088,420 1104,417', '1395,503 1410,502', '1455,517 1462,516', '1611,531 1626,529 1648,520 1678,509 1701,503 1738,495 1753,487 1783,478 1790,471 1813,457 1820,451'].forEach(s => dots(s, '#ff0000'));
dots('134,81 149,95 171,114 193,132 223,157 246,171 268,189 290,208 313,225 335,239 350,251 380,271 402,285 425,300 447,314 469,327 492,341 514,354 544,371', '#99cc00');
dots('566,835 661,818 771,800 857,775 980,744 1041,726 1163,693 1292,666 1402,644 1470,628 1580,609 1626,600 1700,587 1738,578 1775,573 1805,569 1851,563', '#99cc00');

/* lower pane */
const kvo = '52,893 53,915 57,935 62,990 68,1034 73,1025 80,1007 90,996 96,1019 104,1008 112,1000 122,996 132,987 141,984 149,972 156,988 165,980 172,968 190,945 200,936 213,928 231,919 246,917 253,905 270,905 283,901 310,901 340,903 357,903 365,891 380,895 388,897 396,902 410,902 417,901 430,903 440,903 447,909 455,903 468,904 477,900 485,910 500,911 515,911 522,906 529,917 540,915 552,913 560,904 567,904 580,910 590,913 596,917 610,920 620,921 627,924 634,922 640,923 649,920 657,922 680,919 694,922 702,918 716,921 724,943 732,947 747,937 768,934 775,943 783,945 791,941 798,943 813,943 820,937 830,934 850,929 865,928 873,925 880,928 911,930 918,941 925,955 940,947 957,939 975,936 1000,931 1040,928 1070,926 1090,923 1130,923 1170,922 1180,922 1186,915 1210,916 1225,918 1280,919 1332,921 1350,922 1359,928 1375,925 1410,925 1427,934 1440,931 1453,927 1474,925 1500,925 1515,928 1543,934 1556,928 1590,928 1598,923 1605,923 1611,903 1618,903 1636,909 1655,914 1680,918 1710,921 1760,921 1772,926 1775,927 1784,922 1791,928 1810,928 1817,925 1838,926 1845,930 1850,929';
const signal = '52,912 60,915 68,925 80,938 96,952 110,960 125,965 150,969 172,970 190,966 213,958 250,944 290,930 330,920 365,914 400,909 440,906 477,905 520,907 560,909 600,910 640,914 680,917 718,918 750,925 790,930 820,933 850,931 911,931 930,935 975,937 1040,934 1110,930 1180,925 1225,922 1292,920 1340,920 1380,922 1427,925 1460,926 1520,927 1590,928 1620,923 1660,919 1700,919 1760,920 1800,921 1850,922';
band(kvo, signal, '#008c30', '#ccffff');
poly('60,913 85,922 110,936 140,953 172,967 172,970 150,969 125,965 110,960 96,952 80,938 68,925', '#0000ff');
poly('112,1003 122,996 132,987 141,984 149,972 156,988 165,980 172,968 190,978 213,992 236,1007 255,1011 272,1014 245,1015 220,1016 195,1015 180,1019 165,1022 156,1022 149,1007 140,1011 122,1009', '#0000ff');
line(signal, '#ccffff');
line(kvo, '#008c30');
const obv = '272,1015 340,1016 350,1013 357,1014 365,1005 400,1004 447,1002 455,998 510,998 522,993 530,999 552,997 560,990 590,992 640,994 660,993 680,991 700,989 718,989 724,1002 740,1001 765,999 775,1005 800,1006 813,1009 822,1006 850,1005 880,1004 890,1007 910,1009 918,1015 925,1027 980,1026 1000,1028 1050,1027 1060,1029 1110,1030 1150,1032 1180,1032 1190,1028 1240,1027 1280,1027 1330,1028 1350,1028 1357,1032 1450,1034 1550,1035 1600,1034 1611,1020 1700,1021 1760,1018 1850,1018';
const obvSignal = '272,1015 340,1016 400,1013 440,1011 477,1007 522,1003 580,998 640,995 700,993 740,994 800,997 850,1001 890,1004 925,1008 980,1013 1040,1020 1090,1027 1130,1029 1180,1030 1240,1030 1280,1029 1330,1028 1400,1029 1480,1032 1550,1033 1600,1033 1650,1031 1700,1027 1760,1022 1800,1020 1850,1019';
band(obv, obvSignal, '#ff9900', '#0000ff');
line('52,891 55,905 60,940 66,983 75,984 83,981 90,982 96,1002 105,1004 112,1004 122,1009 140,1011 149,1007 156,1022 165,1022 180,1019 195,1015 220,1016 245,1015 ' + obv, '#ff9900');
line(obvSignal, '#0000ff');
line('52,912 70,914 110,923 160,936 213,948 250,956 295,965 340,974 377,982 420,990 460,998 485,1005 505,1009 550,1009 600,1007 640,1005 680,1002 720,1000 780,998 850,998 900,998 960,1002 1020,1006 1080,1011 1150,1017 1200,1021 1240,1023 1280,1025 1340,1028 1400,1030 1500,1031 1650,1031 1700,1030 1760,1028 1851,1026', '#993300', 3);

/* volume */
const vol = {};
'59,898 66,891 74,1029b 81,1031b 96,971 104,1029b 119,1024 126,1026b 134,1032b 141,1021 149,1029b 156,990 164,1030b 171,1028 178,1034b 186,1027 193,1033b 231,1032 238,1032b 253,1017 283,1032 343,1033 350,1032 365,1009 395,1028 410,1033 417,1033 440,1033 447,1025 454,1023 469,1031 477,1026 484,1019 522,1023 529,1017 537,1032b 544,1032b 552,1032b 559,1016 574,1032 596,1029 626,1031 634,1031 641,1033b 649,1031 663,1033 679,1033 693,1033 701,1028 716,1033 723,994 731,1024b 745,1028 760,1033 775,1017 783,1029b 798,1029 806,1033b 813,1031 820,1027 835,1033 850,1031 865,1033 872,1032 880,1032 887,1027 910,1032 917,1014 925,1003 969,1033 999,1030 1014,1032 1029,1032 1059,1030 1104,1033 1126,1034 1148,1032 1171,1033 1186,1022 1216,1033 1357,1025 1410,1032 1417,1032 1425,1028 1447,1031 1455,1033b 1536,1028 1596,1027 1611,994 1641,1034 1708,1033 1738,1033 1783,1029 1790,1029 1813,1033 1842,1030'
  .split(' ').forEach(s => { const [x, y] = s.split(','); vol[Math.round((x - X0) / STEP)] = [parseInt(y), y.endsWith('b')]; });
for (let i = 0; i < 242; i++) {
  const x = Math.round(X0 + i * STEP);
  const [top, down] = vol[i] || [1035, (i * 7 + (i >> 2)) % 5 < 3];
  add('path', { d: `M${x - 1.5} ${top + .5}h4V1036.5h-4z`, fill: 'none', stroke: down ? BLUE : RED });
}

/* crosshair */
hline(557.5, 49, 1863, '#ff0000', 1);
line('1292.5,77 1292.5,1037', '#ff0000');

/* labels inside the plot */
rect(52, 82, 4, 5, '#999');
add('rect', { x: 59.5, y: 78.5, width: 142, height: 14, fill: '#f0f0f0', stroke: '#c0c0c0' });
label(63, 90, '에코바이오 매물대 수(13)');
label(174, 835, '최저 3,650 (4.25%, 09:01)', '#0000ff');
label(1862, 153, '전일종가 3,905 (0.00%)', '#993300', 1);
label(1862, 631, '당일시가 3,730 (-4.48%)', '#00ff00', 1);
label(1682, 822, '(고가+저가+종가)/3', '#ff6600');
label(1818, 822, '저가 지수 24', '#000', 1);
label(1861, 822, '5: 3,804', '#ff6600', 1);
label(1861, 834, '120: 3,803', '#c0c0c0', 1);
label(1861, 834, '10: 3,803', '#00ccff', 1);
label(1861, 846, '1000: 3,806', '#000', 1);
hline(838.5, 1790, 1851, '#c0c0c0', 7);
hline(838.5, 1790, 1863, '#0000ff', 1);
label(1861, 858, '135: 3,804', '#ffcc00', 1);
label(1861, 858, '5: 3,804', '#ff0000', 1);
label(1861, 870, '30: 3,803', '#c8e4ff', 1);
label(1861, 870, '10: 3,803', '#0000ff', 1);
[[928, '거래량: 50', '#339999'], [940, '단순 3: 253', '#ffff00'], [952, '54: 326', '#000'], [964, '13: 283', '#00ff00'], [975, '27: 108', '#ccffff'], [983, 'Signal 60: -143,478', '#993300'], [995, 'Signal 100: -143,974', '#ff9900'], [1007, 'Signal 150: -142,710', '#00ffff'], [1019, 'OBV: -142,245', '#ff9900'], [1019, 'KVO: -2,245', '#008c30'], [1031, 'Signal 24: -141,110', '#0000ff']]
  .forEach(l => label(1861, l[0], l[1], l[2], 1));

/* axes */
rect(7, 76, 42, 981, '#fff');
rect(1867, 76, 46, 981, '#fff');
rect(49, 1038, 1818, 19, '#fff');
rect(1862, 77, 3, 62, '#ff1010');
rect(1862, 139, 3, 736, '#1460cc');
const G = '#909090';
[76.5, 877.5, 1038.5, 1056.5].forEach(y => hline(y, 7, 1913, G, 1));
[7.5, 48.5, 1866.5, 1912.5].forEach(x => line(`${x},76 ${x},1057`, G));
[[3910, 125], [3890, 179], [3870, 232], [3850, 286], [3830, 339], [3810, 394], [3790, 448], [3770, 503], [3730, 613], [3710, 669], [3690, 725], [3670, 781], [3650, 838]]
  .forEach(([v, y]) => axis(46, y + 4, '3,' + String(v).slice(1), '', 1));
[['70.00', 119], ['65.00', 194], ['60.00', 269], ['55.00', 345], ['45.00', 496], ['40.00', 572], ['35.00', 647], ['30.00', 723], ['25.00', 798]]
  .forEach(([s, y]) => axis(1874, y + 4, s));
for (let i = -2; i <= 50; i++) { const y = Math.round(119 + i * 15.1) + .5; hline(y, 1867, i % 5 ? 1869 : 1873, G, 1); }
[['00,000', 902], ['10,000', 931], ['20,000', 959], ['30,000', 988], ['40,000', 1016]].forEach(([s, y]) => {
  axis(42, y + 4, s, '', 1);
  hline(y + 1.5, 43, 48, G, 1);
  for (let k = 1; k < 5; k++) hline(Math.round(y - k * 5.7) + 1.5, 46, 48, G, 1);
});
[['15,000', 904], ['12,500', 926], ['10,000', 948], ['7,500', 970], ['5,000', 991], ['2,500', 1013]].forEach(([s, y]) => {
  axis(1874, y + 4, s);
  hline(y + 1.5, 1867, 1872, G, 1);
  hline(y + 12.5, 1867, 1869, G, 1);
});
const times = [[49, '15:19'], [131, '09:01'], [213, '09:02'], [295, '09:03'], [377, '09:04'], [459, '09:05'], [534, '09:06'], [623, '09:07'], [705, '09:08'], [780, '09:09'], [869, '09:10'], [936, '09:11'], [1004, '09:12'], [1071, '09:13'], [1153, '09:14'], [1407, '09:18'], [1481, '09:19'], [1556, '09:20'], [1638, '09:21'], [1698, '09:22'], [1772, '09:23'], [1817, '09:24'], [1873, '09:24:5']];
times.forEach(([x, s], i) => { if (i && i < 22) line(`${x + .5},1038 ${x + .5},1057`, G); axis(x + 2, 1051, s); });
axis(1363, 1051, '7');

/* price and time markers */
const mark = (x, y, w, h) => add('rect', { x: x + .5, y: y + .5, width: w, height: h, fill: '#ffdc6e', stroke: '#000' });
mark(1224, 1038, 135, 17);
label(1227, 1051, '2024/12/19(목) 09:16:15');
mark(8, 543, 36, 28);
axis(41, 555, '3,750', '', 1);
axis(43, 567, '-3.97%', '#0000ff', 1);
mark(1870, 543, 41, 28);
axis(1905, 555, '3,750', '', 1);
axis(1908, 567, '-3.97%', '#0000ff', 1);
rect(10, 400, 34, 13, '#1460cc');
axis(41, 411, '3,805', '#fff', 1);
axis(39, 423, ':.56%', '#1460cc', 1);
rect(1871, 400, 40, 13, '#1460cc');
axis(1902, 411, '3,805', '#fff', 1);
axis(1874, 423, '-2.56%', '#1460cc');
label(1868, 88, 'LC:4.25', '#ff1010');
label(1868, 100, 'HC:-2.69', '#1460cc');
add('path', { d: 'M12.5 96.5h12v12h-12zM14.5 98.5h8v8h-8zM14.5 101.5h8M17.5 98.5v8M20.5 98.5v8', fill: 'none', stroke: '#333' });
rect(1903, 881, 7, 7, '#444');
line('1905,883 1908,886', '#fff');
line('1908,883 1905,886', '#fff');
```
